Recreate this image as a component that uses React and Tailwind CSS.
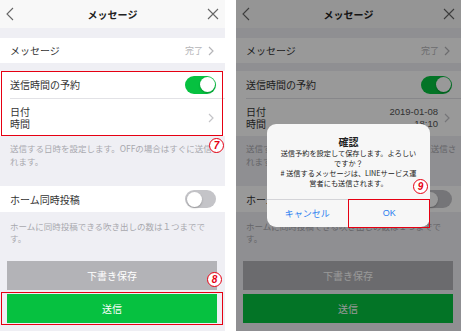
import React from "react";

const Chevron = ({ color = "#c4c4c8" }) => (
    <svg width="6" height="10" viewBox="0 0 6 10" className="shrink-0">
        <polyline points="1,1 5,5 1,9" fill="none" stroke={color} strokeWidth="1.2" />
    </svg>
);

const Toggle = ({ on }) => (
    <div
        className={
            on
                ? "w-[31px] h-[18px] rounded-full bg-[#06c140] flex items-center justify-end px-[1.5px]"
                : "w-[31px] h-[18px] rounded-full bg-[#c4c4c8] flex items-center justify-start px-[1.5px]"
        }
    >
        <div className="w-[15px] h-[15px] rounded-full bg-white shadow-[0_1px_2px_rgba(0,0,0,0.25)]" />
    </div>
);

const Badge = ({ n, className }) => (
    <div
        className={
            "absolute w-[15px] h-[15px] rounded-full border-[1.5px] border-[#e60012] bg-white text-[#e60012] font-bold italic text-[10px] leading-none flex items-center justify-center font-['Liberation_Sans',sans-serif] " +
            className
        }
    >
        {n}
    </div>
);

const Phone = ({ dialog }) => {
    return (
        <div className="relative w-[225px] h-[331px] bg-[#efeff4] flex flex-col overflow-hidden shrink-0">
            {/* header */}
            <div className="h-[28px] bg-[#f8f8f8] grid grid-cols-[1fr_auto_1fr] items-center px-[6px] shrink-0">
                <svg width="8" height="14" viewBox="0 0 8 14">
                    <polyline points="7,1 1,7 7,13" fill="none" stroke="#666" strokeWidth="1.1" />
                </svg>
                <div className="text-[10px] font-bold text-[#222]">メッセージ</div>
                <div className="flex justify-end">
                    <svg width="12" height="12" viewBox="0 0 12 12">
                        <path d="M1 1 L11 11 M11 1 L1 11" stroke="#666" strokeWidth="1.1" />
                    </svg>
                </div>
            </div>
            <div className="h-[10px] shrink-0" />

            <div className="h-[25px] bg-white flex items-center justify-between pl-[10px] pr-[11px] shrink-0">
                <span className="text-[10px] text-[#333]">メッセージ</span>
                <div className="flex items-center gap-[5px]">
                    <span className="text-[9px] text-[#b5b5b8]">完了</span>
                    <Chevron color="#b5b5b8" />
                </div>
            </div>
            <div className="h-[8px] shrink-0" />

            {/* schedule group */}
            <div className="relative shrink-0">
                <div className="h-[27px] bg-white flex items-center justify-between pl-[10px] pr-[9px]">
                    <span className="text-[10px] text-[#333]">送信時間の予約</span>
                    <Toggle on />
                </div>
                <div className="bg-white pl-[10px]">
                    <div className="h-px bg-[#e2e2e6]" />
                </div>
                <div className="h-[37px] bg-white flex items-center justify-between pl-[10px] pr-[11px]">
                    <div className="flex flex-col text-[10px] leading-[12px] text-[#333]">
                        <span>日付</span>
                        <span>時間</span>
                    </div>
                    <div className="flex items-center gap-[6px]">
                        {dialog && (
                            <div className="flex flex-col items-end text-[9.5px] leading-[12px] text-[#555] font-['Liberation_Sans',sans-serif]">
                                <span>2019-01-08</span>
                                <span>18:10</span>
                            </div>
                        )}
                        <Chevron />
                    </div>
                </div>
                {!dialog && (
                    <div className="absolute top-0 bottom-0 left-[1px] right-[2px] border border-[#e60012]" />
                )}
            </div>

            <div className="relative h-[50px] pl-[10px] pr-[4px] pt-[6px] text-[8.5px] leading-[13px] text-[#a8a8ae] shrink-0">
                送信する日時を設定します。OFFの場合はすぐに送信されます。
                {!dialog && <Badge n="7" className="left-[209px] top-[2px]" />}
            </div>

            <div className="h-[26px] bg-white flex items-center justify-between pl-[10px] pr-[9px] shrink-0">
                <span className="text-[10px] text-[#333]">ホーム同時投稿</span>
                <Toggle />
            </div>

            <div className="h-[49px] pl-[10px] pr-[18px] pt-[8px] text-[8.5px] leading-[12px] text-[#a8a8ae] shrink-0">
                ホームに同時投稿できる吹き出しの数は１つまでです。
            </div>

            {/* buttons */}
            <div className="relative shrink-0">
                <div className="ml-[7px] mr-[8px] h-[29px] bg-[#b3b3b7] flex items-center justify-center text-white text-[10px]">
                    下書き保存
                </div>
                <div className="relative mt-[4px]">
                    <div className="ml-[7px] mr-[8px] h-[29px] bg-[#06c140] flex items-center justify-center text-white text-[10px]">
                        送信
                    </div>
                    {!dialog && (
                        <div className="absolute top-[-2px] bottom-[-2px] left-[1px] right-[2px] border border-[#e60012]" />
                    )}
                </div>
                {!dialog && <Badge n="8" className="left-[207px] top-[11px]" />}
            </div>

            {dialog && (
                <>
                    <div className="absolute inset-0 bg-black/40" />
                    <div className="absolute left-[31px] top-[124px] w-[163px] h-[103px] rounded-[9px] bg-[#f7f7f7] flex flex-col">
                        <div className="h-[75px] flex flex-col items-center pt-[11px] text-[#222]">
                            <div className="text-[10px] leading-[13px] font-bold">確認</div>
                            <div className="flex flex-col items-center text-[7.2px] leading-[10px] whitespace-nowrap">
                                <span>送信予約を設定して保存します。よろしい</span>
                                <span>ですか？</span>
                                <span># 送信するメッセージは、LINEサービス運</span>
                                <span>営者にも送信されます。</span>
                            </div>
                        </div>
                        <div className="flex-1 grid grid-cols-2 border-t border-[#d4d4d8] text-[9px] text-[#2b7ff0]">
                            <div className="flex items-center justify-center border-r border-[#d4d4d8]">キャンセル</div>
                            <div className="flex items-center justify-center font-['Liberation_Sans',sans-serif]">OK</div>
                        </div>
                        <div className="absolute left-[81px] top-[75px] w-[82px] h-[29px] border border-[#e60012]" />
                        <Badge n="9" className="left-[146px] top-[55px]" />
                    </div>
                </>
            )}
        </div>
    );
};

export default function App() {
    return (
        <div className="w-[461px] h-[331px] bg-white flex gap-[11px] font-['Noto_Sans_CJK_JP','Noto_Sans',sans-serif]">
            <Phone />
            <Phone dialog />
        </div>
    );
}
